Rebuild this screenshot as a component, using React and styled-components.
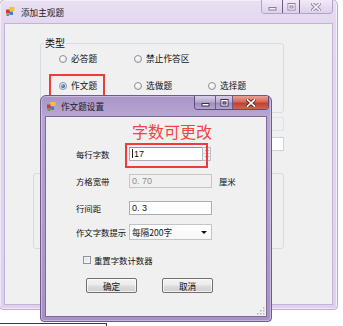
import React from "react";
import styled, { createGlobalStyle, css } from "styled-components";

const CJK = `"Noto Sans CJK SC", "Noto Sans", sans-serif`;

const Global = createGlobalStyle`
  html, body { margin: 0; padding: 0; background: #ffffff; }
  body { font-family: ${CJK}; color: #111; }
  * { box-sizing: border-box; }
`;

const Desktop = styled.div`
  position: relative;
  width: 343px;
  height: 326px;
  overflow: hidden;
  background: #ffffff;
`;

const CropLine = styled.div`
  position: absolute;
  left: 0;
  top: 323px;
  width: 107px;
  height: 8px;
  border-top: 1px solid #3a3a3a;
  border-right: 1px solid #3a3a3a;
`;

const Window = styled.div`
  position: absolute;
  left: ${(p) => p.$x}px;
  top: ${(p) => p.$y}px;
  width: ${(p) => p.$w}px;
  height: ${(p) => p.$h}px;
  display: flex;
  flex-direction: column;
  padding: 0 4px 4px;
  border-radius: 6px 6px 4px 4px;
  ${(p) =>
    p.$active
      ? css`
          border: 1px solid #6e5a8c;
          background: linear-gradient(180deg, #a995c6 0px, #b7a5d3 20px, #a792c6 100%);
          box-shadow: inset 0 0 0 1px rgba(255, 255, 255, 0.35);
        `
      : css`
          border: 1px solid #bcaed0;
          background: linear-gradient(180deg, #e9e0f3 0px, #e3d8f0 22px, #ded1ee 100%);
          box-shadow: inset 0 0 0 1px rgba(255, 255, 255, 0.5);
        `}
`;

const TitleBar = styled.div`
  display: flex;
  align-items: flex-start;
  height: ${(p) => p.$h}px;
  flex: none;
`;

const TitleLeft = styled.div`
  display: flex;
  align-items: center;
  height: 100%;
  gap: ${(p) => p.$gap}px;
  padding-left: 2px;
  flex: 1;
`;

const Title = styled.span`
  font-family: ${CJK};
  font-size: 8.6px;
  line-height: 10px;
  color: #1b1b1b;
  white-space: nowrap;
`;

const CaptionGroup = styled.div`
  display: flex;
  height: 14px;
  margin-right: ${(p) => p.$mr}px;
  border: 1px solid ${(p) => (p.$active ? "#5f4d78" : "#b3a3c8")};
  border-top: none;
  border-radius: 0 0 4px 4px;
  overflow: hidden;
`;

const CaptionButton = styled.div`
  width: ${(p) => p.$w}px;
  height: 100%;
  display: flex;
  align-items: center;
  justify-content: center;
  & + & {
    border-left: 1px solid ${(p) => (p.$active ? "#6d5b87" : "#c4b6d6")};
  }
  ${(p) =>
    p.$close && p.$active
      ? css`
          background: linear-gradient(180deg, #e8a293 0%, #d4695a 45%, #c1402f 55%, #d26452 100%);
        `
      : p.$active
      ? css`
          background: linear-gradient(180deg, #d9cfe6 0%, #b8a9cf 45%, #9f8dbd 55%, #b4a4cd 100%);
        `
      : css`
          background: linear-gradient(180deg, #f1ebf8 0%, #e6ddf1 50%, #ddd1ec 100%);
        `}
`;

const Client = styled.div`
  flex: 1;
  position: relative;
  background: #f0f0f0;
  border: 1px solid ${(p) => (p.$active ? "#7c6a98" : "#c2b4d4")};
`;

/* ---------- icons ---------- */
const AppIcon = () => (
  <svg width="9" height="9" viewBox="0 0 9 9">
    <rect x="0" y="2.5" width="4" height="4" fill="#d23b2a" />
    <rect x="3.5" y="0" width="5" height="4" fill="#f2c42b" />
    <rect x="3.5" y="4.5" width="3.5" height="3.5" fill="#3f7fd4" />
    <rect x="0.5" y="7" width="2.5" height="2" fill="#5aa24a" />
  </svg>
);

const MinGlyph = ({ active }) => (
  <svg width="9" height="8" viewBox="0 0 9 8">
    <rect x="1" y="4.5" width="7" height="2.5" fill={active ? "#fff" : "#f6f2fa"} stroke={active ? "#3b3050" : "#8a7d9c"} strokeWidth="1" />
  </svg>
);
const MaxGlyph = ({ active }) => (
  <svg width="9" height="8" viewBox="0 0 9 8">
    <rect x="1" y="0.5" width="7" height="6.5" fill="none" stroke={active ? "#3b3050" : "#8a7d9c"} strokeWidth="1" />
    <rect x="2" y="1.5" width="5" height="4.5" fill="none" stroke={active ? "#fff" : "#f6f2fa"} strokeWidth="1" />
    <rect x="3" y="3" width="3" height="2" fill="none" stroke={active ? "#3b3050" : "#8a7d9c"} strokeWidth="0.8" />
  </svg>
);
const CloseGlyph = ({ active }) => (
  <svg width="10" height="8" viewBox="0 0 10 8">
    <path d="M1.5 0.8 L8.5 7.2 M8.5 0.8 L1.5 7.2" stroke={active ? "#5a2018" : "#8a7d9c"} strokeWidth="3.4" strokeLinecap="square" />
    <path d="M1.5 0.8 L8.5 7.2 M8.5 0.8 L1.5 7.2" stroke={active ? "#ffffff" : "#f4f0f8"} strokeWidth="1.7" strokeLinecap="square" />
  </svg>
);

const Captions = ({ active, widths, mr }) => (
  <CaptionGroup $active={active} $mr={mr}>
    <CaptionButton $active={active} $w={widths[0]}>
      <MinGlyph active={active} />
    </CaptionButton>
    <CaptionButton $active={active} $w={widths[1]}>
      <MaxGlyph active={active} />
    </CaptionButton>
    <CaptionButton $active={active} $close $w={widths[2]}>
      <CloseGlyph active={active} />
    </CaptionButton>
  </CaptionGroup>
);

/* ---------- outer window contents ---------- */
const OuterBody = styled.div`
  display: flex;
  flex-direction: column;
  padding: 14px 48px 0 35px;
`;

const GroupBox = styled.fieldset`
  margin: ${(p) => p.$mt || 0}px 0 0 ${(p) => p.$ml || 0}px;
  padding: ${(p) => p.$pad};
  height: ${(p) => p.$h}px;
  border: 1px solid #d5dde3;
  border-radius: 3px;
  min-width: 0;
`;

const Legend = styled.legend`
  font-family: ${CJK};
  font-size: 10px;
  line-height: 10px;
  padding: 0 1px;
  margin-left: 3px;
  color: #111;
`;

const RadioGrid = styled.div`
  display: grid;
  grid-template-columns: 75px 74px auto;
  grid-template-rows: 12px 12px;
  row-gap: 15px;
  padding-left: 18px;
`;

const RadioItem = styled.label`
  position: relative;
  display: flex;
  align-items: center;
  gap: 4px;
  font-family: ${CJK};
  font-size: 8.7px;
  line-height: 12px;
  color: #111;
  white-space: nowrap;
  ${(p) =>
    p.$marked &&
    css`
      &::after {
        content: "";
        position: absolute;
        left: -10px;
        top: -6px;
        width: 52px;
        height: 23px;
        border: 2px solid #ee3b3b;
      }
    `}
`;

const RadioCircle = styled.span`
  width: 8px;
  height: 8px;
  border-radius: 50%;
  border: 1px solid #8f9296;
  background: radial-gradient(circle at 40% 35%, #ffffff 0%, #e4e6e8 70%, #d2d5d8 100%);
  display: flex;
  align-items: center;
  justify-content: center;
  flex: none;
  &::after {
    content: "";
    display: ${(p) => (p.$checked ? "block" : "none")};
    width: 4px;
    height: 4px;
    border-radius: 50%;
    background: radial-gradient(circle at 35% 35%, #8fc3f0 0%, #2768b5 60%, #153f7c 100%);
  }
`;

const HiddenRow = styled.div`
  display: flex;
  justify-content: flex-end;
  margin-top: ${(p) => p.$mt}px;
`;

const GhostBox = styled.div`
  width: 60px;
  height: 14px;
  border: 1px solid ${(p) => (p.$white ? "#c9d3dc" : "#dde3e8")};
  background: ${(p) => (p.$white ? "#ffffff" : "#f0f0f0")};
`;

/* ---------- dialog contents ---------- */
const Notice = styled.div`
  font-family: ${CJK};
  font-size: 16px;
  line-height: 17px;
  color: #f04444;
  margin: 6px 0 0 86px;
  white-space: nowrap;
`;

const FormGrid = styled.div`
  display: grid;
  grid-template-columns: 53px auto auto;
  grid-template-rows: 27px 27px 27px 22px;
  align-items: center;
  justify-content: start;
  margin-left: 30px;
`;

const FieldLabel = styled.span`
  font-family: ${CJK};
  font-size: 8.4px;
  line-height: 12px;
  color: #111;
  white-space: nowrap;
`;

const UnitLabel = styled(FieldLabel)`
  margin-left: 7px;
`;

const inputBase = css`
  height: 14px;
  display: flex;
  align-items: center;
  padding-left: 2px;
  font-family: "Liberation Sans", ${CJK};
  font-size: 9px;
  line-height: 12px;
  border: 1px solid #abadb3;
  border-top-color: #8e9095;
`;

const TextBox = styled.div`
  ${inputBase};
  width: 83px;
  background: ${(p) => (p.$disabled ? "#f0f0f0" : "#ffffff")};
  color: ${(p) => (p.$disabled ? "#8d8d8d" : "#111")};
  border-color: ${(p) => (p.$disabled ? "#c6c6c6" : "#abadb3")};
`;

const Spin = styled.div`
  position: relative;
  display: flex;
  width: 82px;
  height: 14px;
  &::after {
    content: "";
    position: absolute;
    left: -4px;
    top: -4px;
    width: 79px;
    height: 21px;
    border: 2px solid #ee3b3b;
    pointer-events: none;
  }
`;

const SpinText = styled.div`
  ${inputBase};
  flex: 1;
  background: #fff;
  border-right: none;
  gap: 0;
`;

const Caret = styled.span`
  width: 1px;
  height: 9px;
  background: #222;
  margin-right: 1px;
`;

const SpinButtons = styled.div`
  width: 9px;
  display: flex;
  flex-direction: column;
  border: 1px solid #b9bcc2;
  background: #eef0f3;
`;

const SpinBtn = styled.div`
  flex: 1;
  display: flex;
  align-items: center;
  justify-content: center;
  & + & {
    border-top: 1px solid #d0d3d8;
  }
  &::after {
    content: "";
    border-left: 2px solid transparent;
    border-right: 2px solid transparent;
    ${(p) => (p.$up ? "border-bottom: 2px solid #6d7480;" : "border-top: 2px solid #6d7480;")}
  }
`;

const Combo = styled.div`
  ${inputBase};
  width: 83px;
  height: 16px;
  justify-content: space-between;
  padding-right: 4px;
  background: linear-gradient(180deg, #ffffff 0%, #f7f7f7 100%);
  border: 1px solid #c2c4c9;
  color: #111;
  font-family: ${CJK};
  font-size: 8.6px;
`;

const ComboArrow = styled.span`
  width: 0;
  height: 0;
  border-left: 3px solid transparent;
  border-right: 3px solid transparent;
  border-top: 3px solid #111;
`;

const CheckRow = styled.label`
  display: flex;
  align-items: center;
  gap: 3px;
  margin: 10px 0 0 37px;
  height: 14px;
`;

const CheckBox = styled.span`
  width: 8px;
  height: 8px;
  border: 1px solid #8f9296;
  background: linear-gradient(135deg, #d6d8db 0%, #eceef0 60%, #ffffff 100%);
  box-shadow: inset 0 0 0 1px #f4f4f4;
`;

const ButtonRow = styled.div`
  display: flex;
  gap: 25px;
  margin: 11px 0 0 40px;
`;

const PushButton = styled.div`
  width: 51px;
  height: 15px;
  border: 1px solid #707070;
  border-radius: 2px;
  background: linear-gradient(180deg, #f3f3f3 0%, #ebebeb 48%, #dddddd 52%, #cfcfcf 100%);
  box-shadow: inset 0 0 0 1px rgba(255, 255, 255, 0.7);
  display: flex;
  align-items: center;
  justify-content: center;
  font-family: ${CJK};
  font-size: 8.6px;
  line-height: 12px;
  color: #111;
`;

const SizeGrip = styled.svg`
  position: absolute;
  right: 1px;
  bottom: 1px;
`;

export default function App() {
  return (
    <>
      <Global />
      <Desktop>
        <Window $x={-1} $y={-1} $w={339} $h={311}>
          <TitleBar $h={23}>
            <TitleLeft $gap={6}>
              <AppIcon />
              <Title>添加主观题</Title>
            </TitleLeft>
            <Captions widths={[20, 17, 33]} mr={0} />
          </TitleBar>
          <Client>
            <OuterBody>
              <GroupBox $h={75} $pad="5px 0 0 0">
                <Legend>类型</Legend>
                <RadioGrid>
                  <RadioItem>
                    <RadioCircle />
                    必答题
                  </RadioItem>
                  <RadioItem>
                    <RadioCircle />
                    禁止作答区
                  </RadioItem>
                  <span />
                  <RadioItem $marked>
                    <RadioCircle $checked />
                    作文题
                  </RadioItem>
                  <RadioItem>
                    <RadioCircle />
                    选做题
                  </RadioItem>
                  <RadioItem>
                    <RadioCircle />
                    选择题
                  </RadioItem>
                </RadioGrid>
              </GroupBox>
              <HiddenRow $mt={4}>
                <GhostBox />
              </HiddenRow>
              <HiddenRow $mt={6}>
                <GhostBox $white />
              </HiddenRow>
              <GroupBox $ml={-7} $mt={22} $h={76} $pad="0" />
            </OuterBody>
          </Client>
        </Window>

        <Window $active $x={40} $y={95} $w={232} $h={227}>
          <TitleBar $h={20}>
            <TitleLeft $gap={5}>
              <AppIcon />
              <Title>作文题设置</Title>
            </TitleLeft>
            <Captions active widths={[20, 17, 36]} mr={-2} />
          </TitleBar>
          <Client $active>
            <Notice>字数可更改</Notice>
            <FormGrid>
              <FieldLabel>每行字数</FieldLabel>
              <Spin>
                <SpinText>
                  <Caret />
                  17
                </SpinText>
                <SpinButtons>
                  <SpinBtn $up />
                  <SpinBtn />
                </SpinButtons>
              </Spin>
              <span />
              <FieldLabel>方格宽带</FieldLabel>
              <TextBox $disabled>0. 70</TextBox>
              <UnitLabel>厘米</UnitLabel>
              <FieldLabel>行间距</FieldLabel>
              <TextBox>0. 3</TextBox>
              <span />
              <FieldLabel>作文字数提示</FieldLabel>
              <Combo>
                <span>每隔200字</span>
                <ComboArrow />
              </Combo>
              <span />
            </FormGrid>
            <CheckRow>
              <CheckBox />
              <FieldLabel>重置字数计数器</FieldLabel>
            </CheckRow>
            <ButtonRow>
              <PushButton>确定</PushButton>
              <PushButton>取消</PushButton>
            </ButtonRow>
            <SizeGrip width="8" height="8" viewBox="0 0 8 8">
              {[
                [6, 0],
                [6, 3],
                [3, 3],
                [6, 6],
                [3, 6],
                [0, 6],
              ].map(([x, y], i) => (
                <rect key={i} x={x} y={y} width="1.5" height="1.5" fill="#b5b5b5" />
              ))}
            </SizeGrip>
          </Client>
        </Window>
        <CropLine />
      </Desktop>
    </>
  );
}
